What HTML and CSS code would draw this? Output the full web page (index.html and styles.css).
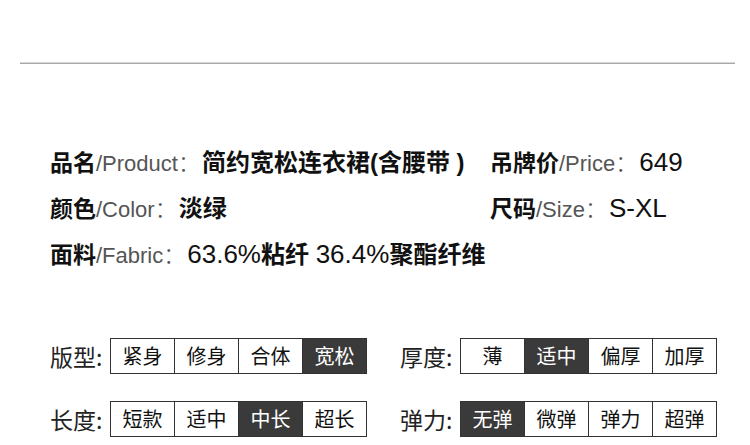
FILE: index.html
```html
<!DOCTYPE html>
<html lang="zh-CN">
<head>
    <meta charset="UTF-8">
    <meta name="viewport" content="width=device-width, initial-scale=1.0">
    <title>商品信息</title>
    <link rel="stylesheet" href="styles.css">
</head>
<body>
    <div class="rule"></div>

    <!-- 基本信息 -->
    <div class="info">
        <div class="info-item"><b>品名</b><span class="sub">/Product：</span><span class="val">简约宽松连衣裙(含腰带 )</span></div>
        <div class="info-item"><b>吊牌价</b><span class="sub">/Price：</span><span class="val num">649</span></div>
        <div class="info-item"><b>颜色</b><span class="sub">/Color：</span><span class="val">淡绿</span></div>
        <div class="info-item"><b>尺码</b><span class="sub">/Size：</span><span class="val num">S-XL</span></div>
        <div class="info-item wide"><b>面料</b><span class="sub">/Fabric：</span><span class="val"><span class="num">63.6%</span>粘纤 <span class="num">36.4%</span>聚酯纤维</span></div>
    </div>

    <!-- 尺码特征 -->
    <div class="specs">
        <div class="spec">
            <span class="spec-label">版型:</span>
            <div class="opts">
                <span>紧身</span><span>修身</span><span>合体</span><span class="on">宽松</span>
            </div>
        </div>
        <div class="spec">
            <span class="spec-label">厚度:</span>
            <div class="opts">
                <span>薄</span><span class="on">适中</span><span>偏厚</span><span>加厚</span>
            </div>
        </div>
        <div class="spec">
            <span class="spec-label">长度:</span>
            <div class="opts">
                <span>短款</span><span>适中</span><span class="on">中长</span><span>超长</span>
            </div>
        </div>
        <div class="spec">
            <span class="spec-label">弹力:</span>
            <div class="opts">
                <span class="on">无弹</span><span>微弹</span><span>弹力</span><span>超弹</span>
            </div>
        </div>
    </div>
</body>
</html>
```

FILE: styles.css
```css
body {
    margin: 0;
    background: #ffffff;
    color: #111;
    font-family: "Liberation Sans", "Noto Sans CJK SC", sans-serif;
}
.rule {
    margin: 62px 15px 0 20px;
    height: 1px;
    background: #a8a8a8;
    border-top: 1px solid #d8d8d8;
}
.info {
    display: grid;
    grid-template-columns: 440px auto;
    margin-top: 74px;
    padding-left: 50px;
}
.info-item {
    height: 46px;
    line-height: 46px;
    white-space: nowrap;
}
.info-item.wide {
    grid-column: 1 / 3;
}
.info-item b {
    font-family: "Noto Sans CJK SC", sans-serif;
    font-size: 23px;
    font-weight: 700;
}
.sub {
    font-size: 22px;
    font-weight: 300;
    color: #555;
    padding-right: 2px;
}
.val {
    font-size: 24px;
    font-weight: 700;
    color: #111;
}
.num {
    font-size: 26px;
    font-weight: 400;
}
.specs {
    display: grid;
    grid-template-columns: 350px 350px;
    row-gap: 27px;
    margin-top: 62px;
    padding-left: 50px;
}
.spec {
    display: flex;
    align-items: center;
    height: 36px;
}
.spec-label {
    width: 60px;
    font-family: "Noto Sans CJK SC", sans-serif;
    font-size: 23px;
    color: #222;
    line-height: 36px;
}
.opts {
    display: flex;
    border: 1px solid #333;
}
.opts span {
    width: 63px;
    height: 34px;
    line-height: 34px;
    text-align: center;
    font-family: "Noto Sans CJK SC", sans-serif;
    font-size: 20px;
    color: #111;
    border-left: 1px solid #333;
}
.opts span:first-child {
    border-left: none;
}
.opts span.on {
    background: #3a3a3a;
    color: #fff;
}
```
